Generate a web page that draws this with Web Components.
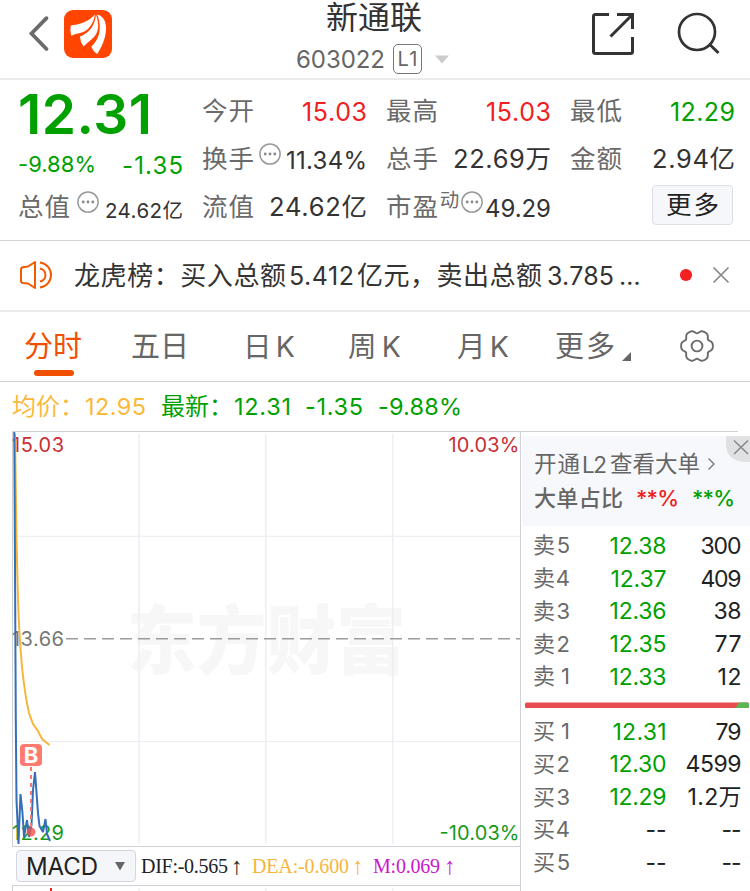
<!DOCTYPE html>
<html lang="zh-CN">
<head>
<meta charset="utf-8">
<title>新通联 603022</title>
<style>
body{margin:0;background:#fff;width:750px;height:891px;overflow:hidden;font-family:"Inter","Noto Sans CJK SC",sans-serif;color:#333}
</style>
</head>
<body>
<stock-page></stock-page>
<script>
/* One line of text, tracked so that it fills the width given by w. */
class FitText extends HTMLElement{
  connectedCallback(){
    if(this.shadowRoot)return;
    const w=+this.getAttribute('w'),s=+this.getAttribute('s')||25.5,l=+this.getAttribute('ml')||0,d=+this.getAttribute('dy')||0;
    const root=this.attachShadow({mode:'open'});
    root.innerHTML=`<style>:host{display:block;flex:none;width:${w}px;margin-left:${l}px;margin-top:${d*2}px;font-size:${s}px;line-height:32px;height:32px;white-space:nowrap;font-weight:${this.getAttribute('wt')||400};color:${this.getAttribute('c')||'inherit'}}</style><span><slot></slot></span>`;
    const span=root.querySelector('span'),n=[...this.textContent].length;
    const nat=span.getBoundingClientRect().width;
    if(n>1)span.style.letterSpacing=((w-nat)/(n-1))+'px';
  }
}
class MoreDots extends HTMLElement{
  connectedCallback(){
    this.attachShadow({mode:'open'}).innerHTML=`<style>:host{display:block;flex:none;width:22px;height:22px}svg{display:block}</style>
    <svg width="22" height="22"><circle cx="11" cy="11" r="10.1" fill="none" stroke="#999" stroke-width="1.5"/><g fill="#888"><circle cx="6.2" cy="11" r="1.4"/><circle cx="11" cy="11" r="1.4"/><circle cx="15.8" cy="11" r="1.4"/></g></svg>`;
  }
}
class AppHeader extends HTMLElement{
  connectedCallback(){
    this.attachShadow({mode:'open'}).innerHTML=`<style>
    :host{display:flex;height:78px;border-bottom:2px solid #ebebeb;box-sizing:content-box}
    svg{display:block;flex:none}
    .mid{width:184px;margin-left:184px;padding-top:2px}
    .name{margin-left:30px}
    .code{display:flex;align-items:center;height:30px;margin-top:10px;color:#666}
    .l1{box-sizing:border-box;width:29px;height:30px;border:1px solid #777;border-radius:5px;margin-left:8px;display:flex;align-items:center;justify-content:center}
    .r{margin-left:102px}
    </style>
    <svg width="112" height="78"><path d="M46.5 18.2L31.5 33.5L46.5 49" fill="none" stroke="#6b6b6b" stroke-width="3.8" stroke-linecap="round" stroke-linejoin="miter"/>
    <rect x="64" y="10" width="48" height="48" rx="9" fill="#ff4500"/>
    <g fill="#fff"><path d="M70.500 27Q70.500 25.500 72 25.300C82 24 89 21 95 14.500C94 22 89 31 81 32.800C77 33.600 74 34.600 71.200 35.800Q70 31 70.500 27Z"/><path d="M80 36.500C88 33.500 95 26.500 96 14.500C100 26 98 32.500 94 37C90.500 41 87 42.500 83.500 46.500Q80 41.500 80 36.500Z"/><path d="M97.300 14.500C103.500 16 106.500 22 106 30C105.600 39 101 48 97.300 54Q93.500 52 91.300 46.500C98 41 103 30 97.300 14.500Z"/></g></svg>
    <div class="mid"><div class="name"><fit-text s="32" w="96" c="#333">新通联</fit-text></div>
    <div class="code"><fit-text s="24" w="89" dy="0.5">603022</fit-text><div class="l1"><fit-text s="20" w="20">L1</fit-text></div><svg width="16" height="9" style="margin-left:12px"><path d="M1 0.5H15L8 8.5Z" fill="#ccc"/></svg></div></div>
    <svg class="r" width="160" height="78"><g transform="translate(-582 0)" fill="none" stroke="#333" stroke-width="3"><path d="M609 14.500H595.500Q593.500 14.500 593.500 16.500V51.500Q593.500 53.500 595.500 53.500H630.500Q632.500 53.500 632.500 51.500V37M617 14.500H632.500V29M632 15L610.500 36.500"/><circle cx="697" cy="32" r="18" stroke-width="2.7"/><path d="M709.8 44.5L718.5 53" stroke-width="3"/></g></svg>`;
  }
}
class QuoteGrid extends HTMLElement{
  connectedCallback(){
    this.attachShadow({mode:'open'}).innerHTML=`<style>
    :host{display:flex;height:160px;border-bottom:1px solid #d4d4d8;color:#333}
    .first{width:165px;margin-left:18px}
    .row{display:flex;align-items:center;height:48px;justify-content:space-between}
    .price{height:67px;display:flex;align-items:center}
    .pct{height:36px;display:flex;align-items:center;justify-content:space-between}
    .cell{width:165px;margin-left:19px;padding-top:7px}
    .l{color:#6a6a6a}
    more-dots{margin-top:-11px}
    .btn{box-sizing:border-box;width:81px;height:40px;border:1px solid #dcdfe4;border-radius:4px;background:#f6f7fa;margin-left:auto;margin-right:2px;display:flex;align-items:center;justify-content:center;margin-top:-4px}
    </style>
    <div class="first"><div class="price"><fit-text s="55" w="134" wt="600" c="#00a000">12.31</fit-text></div>
      <div class="pct"><fit-text s="22" w="78" c="#00a000" dy="-1.5">-9.88%</fit-text><fit-text s="24" w="61" c="#00a000" dy="1">-1.35</fit-text></div>
      <div class="row"><fit-text class="l" w="52">总值</fit-text><more-dots></more-dots><fit-text s="20.5" w="78" dy="4">24.62亿</fit-text></div></div>
    <div class="cell"><div class="row"><fit-text class="l" w="52">今开</fit-text><fit-text s="25" w="65" dy="0.5" c="#f02020">15.03</fit-text></div>
      <div class="row"><fit-text class="l" w="52">换手</fit-text><more-dots></more-dots><fit-text s="24" w="81" dy="1.5">11.34%</fit-text></div>
      <div class="row"><fit-text class="l" w="52">流值</fit-text><fit-text w="98">24.62亿</fit-text></div></div>
    <div class="cell"><div class="row"><fit-text class="l" w="52">最高</fit-text><fit-text s="25" w="65" dy="0.5" c="#f02020">15.03</fit-text></div>
      <div class="row"><fit-text class="l" w="52">总手</fit-text><fit-text w="98">22.69万</fit-text></div>
      <div class="row"><fit-text class="l" w="52">市盈</fit-text><fit-text class="l" w="20" s="19.5" dy="-7">动</fit-text><more-dots></more-dots><fit-text s="24" w="66" dy="1.5">49.29</fit-text></div></div>
    <div class="cell"><div class="row"><fit-text class="l" w="52">最低</fit-text><fit-text s="25" w="65" dy="0.5" c="#00a000">12.29</fit-text></div>
      <div class="row"><fit-text class="l" w="52">金额</fit-text><fit-text w="83">2.94亿</fit-text></div>
      <div class="row"><div class="btn"><fit-text w="53" c="#222">更多</fit-text></div></div></div>`;
  }
}
class NewsTicker extends HTMLElement{
  connectedCallback(){
    this.attachShadow({mode:'open'}).innerHTML=`<style>:host{display:flex;align-items:center;height:69px;border-bottom:2px solid #ebebeb;color:#333}svg{display:block;flex:none}</style>
    <svg width="74" height="69"><g transform="translate(0 -241)" fill="none" stroke="#f05a00" stroke-width="2" stroke-linejoin="round"><path d="M21 269.500Q21 267.500 23 267.200L28 266.500L35 262V288L28 283.500L23 283Q21 282.700 21 280.700Z"/><path d="M40 262.500A12.600 12.600 0 0 1 40 287.500M40 268.500A6.600 6.600 0 0 1 40 281.500"/></g></svg>
    <fit-text s="26" w="212">龙虎榜：买入总额</fit-text><fit-text s="25" w="65" ml="3">5.412</fit-text><fit-text s="26" w="185" ml="3">亿元，卖出总额</fit-text><fit-text s="25" w="67" ml="5">3.785</fit-text><fit-text s="25" w="26" ml="5">…</fit-text>
    <svg width="105" height="69"><circle cx="41" cy="34" r="6.1" fill="#f52020"/><path d="M68.500 26.500L83.500 41.500M83.500 26.500L68.500 41.500" stroke="#888" stroke-width="1.7"/></svg>`;
  }
}
class ChartTabs extends HTMLElement{
  connectedCallback(){
    this.attachShadow({mode:'open'}).innerHTML=`<style>:host{display:flex;height:69px;align-items:center;border-bottom:1px solid #d0d0d4;color:#666}
    .on{flex:none;position:relative;margin-left:24px;color:#f05000}.on i{position:absolute;left:10px;top:39px;width:40px;height:6px;border-radius:3px;background:#f05000}svg{display:block;flex:none}</style>
    <div class="on"><fit-text s="29" w="58">分时</fit-text><i></i></div>
    <fit-text s="29" w="58" ml="49">五日</fit-text><fit-text s="28.5" w="52" ml="54">日K</fit-text><fit-text s="28.5" w="53" ml="53">周K</fit-text><fit-text s="28.5" w="52" ml="56">月K</fit-text><fit-text s="29" w="60" ml="46">更多</fit-text>
    <svg width="134" height="69" style="margin-left:1px"><g transform="translate(-616 -312)"><path d="M622 361L631 352V361Z" fill="#666"/><g fill="none" stroke="#6a6a6a" stroke-width="1.9"><circle cx="697" cy="346" r="5.400"/><path id="gear" stroke-linejoin="round"/></g></g></svg>`;
    let d='';
    for(let i=0;i<=120;i++){const a=i*Math.PI/60,r=14.7+1.55*Math.cos(6*a)-.4*Math.cos(12*a);d+=(i?'L':'M')+(697+r*Math.cos(a)).toFixed(2)+' '+(346-r*Math.sin(a)).toFixed(2);}
    this.shadowRoot.querySelector('#gear').setAttribute('d',d+'Z');
  }
}
class PriceLegend extends HTMLElement{
  connectedCallback(){
    this.attachShadow({mode:'open'}).innerHTML=`<style>:host{display:flex;height:49px;align-items:center;color:#00a000}</style>
    <fit-text s="24" w="72" ml="12" c="#fbb93c">均价：</fit-text><fit-text s="23.500" w="61" ml="1" dy="0.5" c="#fbb93c">12.95</fit-text><fit-text s="24" w="72" ml="15">最新：</fit-text><fit-text s="23.500" w="57" dy="0.5" ml="1">12.31</fit-text><fit-text s="23.500" w="58" dy="0.5" ml="14">-1.35</fit-text><fit-text s="23.500" w="84" dy="0.5" ml="15">-9.88%</fit-text>`;
  }
}
class MinuteChart extends HTMLElement{
  connectedCallback(){
    this.attachShadow({mode:'open'}).innerHTML=`<style>:host{display:block;width:521px}svg{display:block}
    .bar{display:flex;align-items:center;height:38px;box-sizing:border-box;padding-left:16px;font-family:"Liberation Serif",serif}
    .sel{box-sizing:border-box;width:120px;height:32px;border:1px solid #d3d6de;border-radius:4px;background:#f5f6fa;display:flex;align-items:center;font-family:"Inter",sans-serif;color:#222;margin-right:5px}
    .wrap{border-right:1px solid #d0d2d8;width:520px}</style>
    <div class="wrap">
    <svg width="520" height="416" viewBox="0 431 520 416">
      <text x="127" y="668" font-size="75" font-weight="900" fill="#f7f7f7" textLength="279" lengthAdjust="spacingAndGlyphs">东方财富</text>
      <g stroke="#eeeef4" stroke-width="1.6"><path d="M139 434V844M265.700 434V844M392.700 434V844"/><path d="M13 536.300H520M13 741.500H520" stroke-width="1.200"/></g>
      <path d="M12.500 846.500V431.500H520M12 846.500H520" fill="none" stroke="#cfd1d6"/>
      <path d="M66 638.800H520" stroke="#9c9c9c" stroke-width="1.600" stroke-dasharray="12 6"/>
      <g font-size="20" >
        <text x="12" y="451.500" textLength="52" fill="#c83037">15.03</text><text x="448.500" y="451.500" textLength="71" fill="#c83037">10.03%</text>
        <text x="12" y="645.500" textLength="52" fill="#777">13.66</text><text x="12" y="839.500" textLength="52" fill="#159a1e">12.29</text><text x="439.500" y="839.500" textLength="80" fill="#159a1e">-10.03%</text></g>
      <path d="M15 434L16.500 540L18 600C19 630 20 645 22 667C24 686 26 700 29 713L33 724L38 731L42 739L49.500 745" fill="none" stroke="#f7b53c" stroke-width="2"/>
      <path d="M14.300 432L15.800 720L16.500 800L18.500 844L20.500 794L22.500 813L24 837L27 820L29 837L31.500 825L33 790L35 772L38 813L39.500 826L43 832L45.500 819L47 834L50 841" fill="none" stroke="#346fb7" stroke-width="2" stroke-linejoin="bevel"/>
      <path d="M31 767V830" stroke="#ff7469" stroke-width="2" stroke-dasharray="4 4"/><circle cx="31" cy="832" r="4.500" fill="#f0524f" opacity=".8"/>
      <rect x="20" y="744" width="22" height="22" rx="4" fill="#ff7b70"/><text x="31" y="763" font-size="22" font-weight="700" fill="#fff" text-anchor="middle">B</text>
    </svg>
    <div class="bar"><div class="sel"><fit-text s="24" w="72" ml="9" dy="0.5">MACD</fit-text><svg width="12" height="10" style="margin-left:16px"><path d="M1 1H11L6 9.500Z" fill="#666"/></svg></div>
    <fit-text s="20" w="87" c="#222">DIF:-0.565</fit-text><fit-text s="24" w="12" ml="3" c="#222">↑</fit-text><fit-text s="20" w="97" ml="9" c="#f7b53c">DEA:-0.600</fit-text><fit-text s="24" w="12" ml="3" c="#f7b53c">↑</fit-text><fit-text s="20" w="67" ml="9" c="#cc18cc">M:0.069</fit-text><fit-text s="24" w="12" ml="4" c="#cc18cc">↑</fit-text></div>
    <svg width="520" height="6"><path d="M12.500 6V.5H520" fill="none" stroke="#cfd1d6"/><path d="M139 3V6M265.700 3V6M392.700 3V6" stroke="#eeeef4" stroke-width="1.600"/><path d="M51 3V6" stroke="#e22" stroke-width="2"/></svg></div>`;
  }
}
class OrderRow extends HTMLElement{
  connectedCallback(){
    const [n,p,pw,q,qw]=this.getAttribute('data').split('|'),none=p==='--';
    this.attachShadow({mode:'open'}).innerHTML=`<style>:host{display:flex;height:32.75px;align-items:center;padding:0 8.5px 0 12px;color:#222}.p{width:96.5px;display:flex;justify-content:flex-end;color:${none?'#222':'#00a000'}}.q{flex:1;display:flex;justify-content:flex-end}</style>
    <fit-text s="22" w="37" c="#6a6a6a">${n}</fit-text><div class="p"><fit-text s="23" dy="0.5" w="${pw}">${p}</fit-text></div><div class="q"><fit-text s="23" dy="0.5" w="${qw}">${q}</fit-text></div>`;
  }
}
class OrderBook extends HTMLElement{
  connectedCallback(){
    const rows=a=>a.map(r=>`<order-row data="${r}"></order-row>`).join('');
    this.attachShadow({mode:'open'}).innerHTML=`<style>:host{display:block;width:229px}
    .line{height:1px;width:217px;background:#d0d2d8}
    .promo{position:relative;height:90px;margin:4px 0 3px 1px;background:#f7f8fb;box-sizing:border-box;padding:12px 0 0 12px;color:#666}
    .promo>div{display:flex;align-items:center;height:32px}.promo>div+div{margin-top:2px}
    .x{position:absolute;right:0;top:0}svg{display:block}</style>
    <div class="line"></div>
    <div class="promo"><div><fit-text s="22.500" w="46">开通</fit-text><fit-text s="22.500" w="25" ml="2" dy="0.5">L2</fit-text><fit-text s="22.500" w="90" ml="3">查看大单</fit-text><svg width="9" height="14" style="margin-left:7px"><path d="M1.500 1.500L7 7L1.500 12.500" fill="none" stroke="#777" stroke-width="1.400"/></svg></div>
    <div><fit-text s="22" w="89" wt="500">大单占比</fit-text><fit-text s="22" w="43" ml="13" wt="500" c="#f02020">**%</fit-text><fit-text s="22" w="43" ml="13" wt="500" c="#00a000">**%</fit-text></div>
    <svg class="x" width="24" height="26"><path d="M0 0H24V26H18Q0 24 0 8Z" fill="#e0e1e3"/><path d="M8 4.500L22 18M22 4.500L8 18" stroke="#888" stroke-width="1.500"/></svg></div>
    ${rows(['卖5|12.38|57|300|41','卖4|12.37|56|409|41','卖3|12.36|57|38|28','卖2|12.35|57|77|27','卖1|12.33|57|12|24'])}
    <svg width="229" height="22"><rect x="4" y="9.500" width="224" height="5.500" rx="1.500" fill="#e84b50"/><path d="M214.500 15L218 9.500H226.500Q228 9.500 228 11V13.500Q228 15 226.500 15Z" fill="#5ab552"/></svg>
    ${rows(['买1|12.31|54|79|26','买2|12.30|57|4599|56','买3|12.29|57|1.2万|54','买4|--|21|--|20','买5|--|21|--|20'])}`;
  }
}
class StockPage extends HTMLElement{
  connectedCallback(){
    this.attachShadow({mode:'open'}).innerHTML=`<style>:host{display:block;width:750px;height:891px;overflow:hidden;background:#fff}.main{display:flex}</style>
    <app-header></app-header><quote-grid></quote-grid><news-ticker></news-ticker><chart-tabs></chart-tabs><price-legend></price-legend>
    <div class="main"><minute-chart></minute-chart><order-book></order-book></div>`;
  }
}
customElements.define('fit-text',FitText);
customElements.define('more-dots',MoreDots);
customElements.define('app-header',AppHeader);
customElements.define('quote-grid',QuoteGrid);
customElements.define('news-ticker',NewsTicker);
customElements.define('chart-tabs',ChartTabs);
customElements.define('price-legend',PriceLegend);
customElements.define('minute-chart',MinuteChart);
customElements.define('order-row',OrderRow);
customElements.define('order-book',OrderBook);
customElements.define('stock-page',StockPage);
</script>
</body>
</html>
